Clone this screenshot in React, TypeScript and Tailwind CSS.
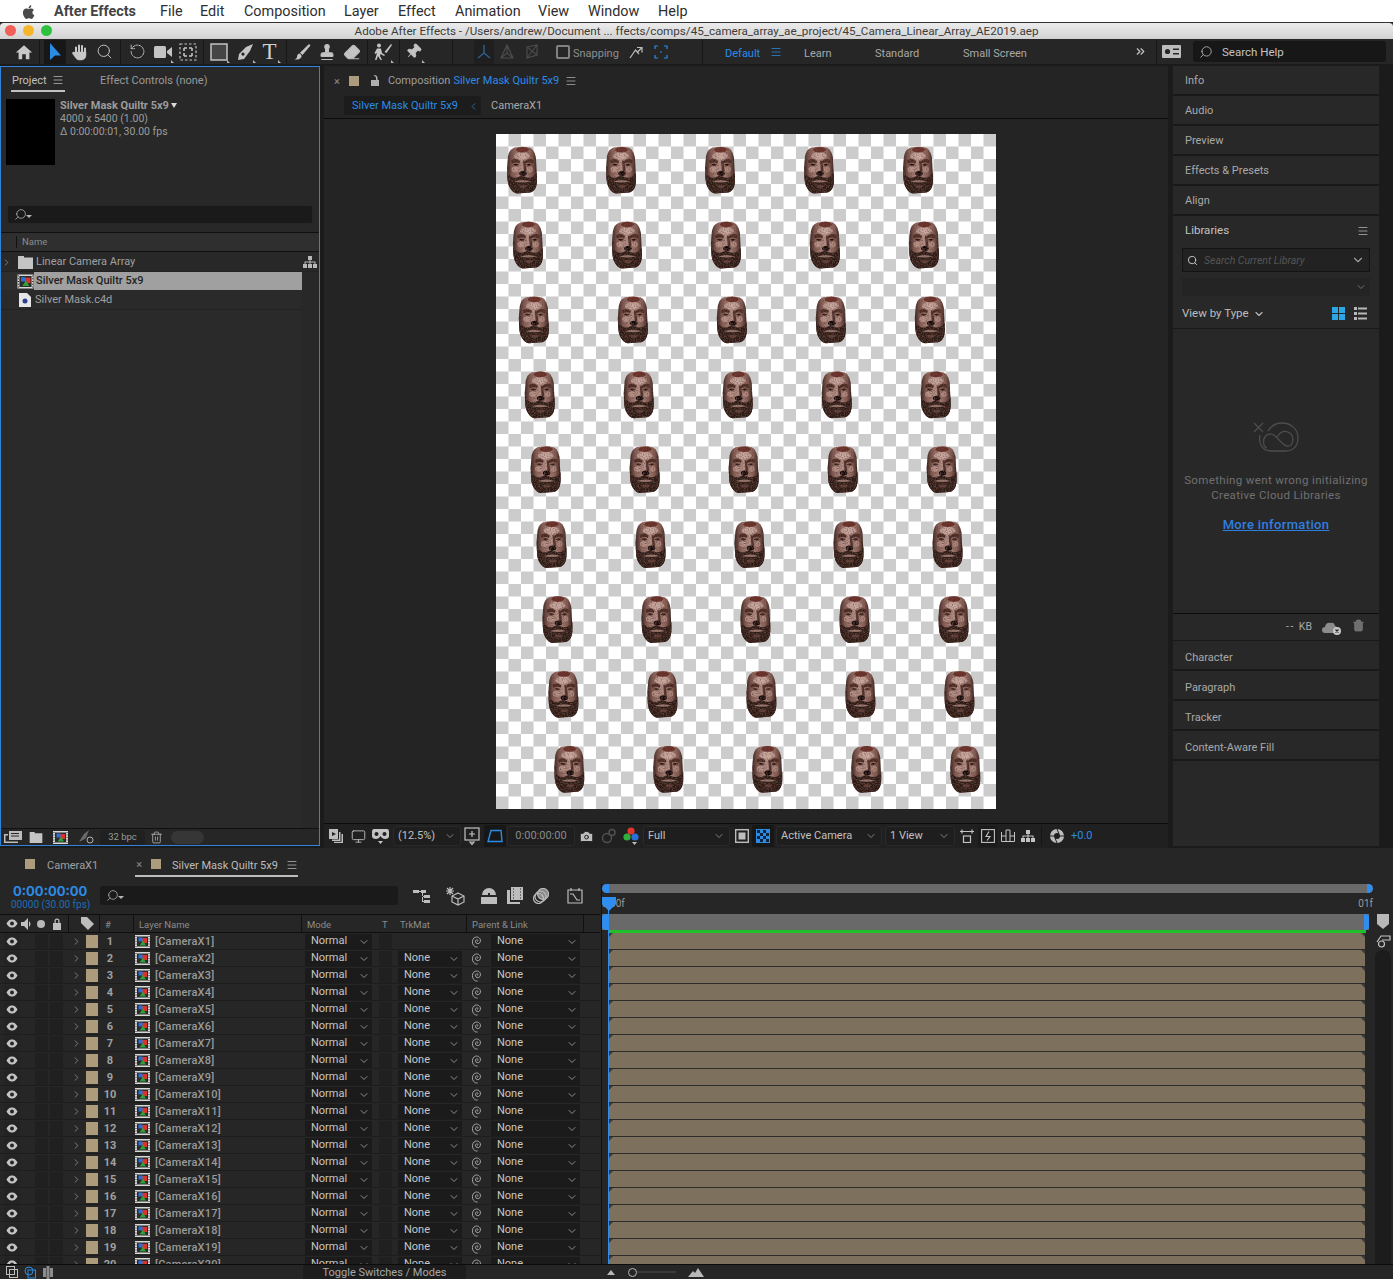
import React from 'react';
import {
  ChevronDown, ChevronRight, Search, RotateCcw, Stamp, Eraser, Pin, Trash2, Menu, Monitor, Camera, ChevronsRight,
} from 'lucide-react';

const BLUE = '#2b8ce6';
const LAYERS = Array.from({ length: 20 }, (_, i) => i + 1);
const ROWS = Array.from({ length: 9 }, (_, i) => i);
const COLS = Array.from({ length: 5 }, (_, i) => i);

// small triangle that marks a tool with a flyout
const Flyout = () => <span className="absolute right-[1px] bottom-[1px] h-0 w-0 border-t-[3px] border-l-[3px] border-t-transparent border-l-[#b5b5b5]" />;

const Slot = ({ className = 'w-[25px]', fly, children }: { className?: string; fly?: boolean; children?: React.ReactNode }) => (
  <div className={`relative flex h-[24px] shrink-0 items-center justify-center text-[#bdbdbd] ${className}`}>
    {children}
    {fly && <Flyout />}
  </div>
);

const Sep = ({ className = 'h-[24px]' }: { className?: string }) => <div className={`w-[1px] shrink-0 bg-[#171717] ${className}`} />;

const Burger = ({ className = '' }: { className?: string }) => (
  <Menu size={12} strokeWidth={1.5} className={`shrink-0 ${className}`} />
);

// composition icon: filmstrip frame with the red, green and blue shapes
const CompIcon = ({ className = '' }: { className?: string }) => (
  <svg width="15" height="13" viewBox="0 0 15 13" className={`shrink-0 ${className}`}>
    <rect width="15" height="13" fill="#d8d8d8" />
    <rect x="2" y="1.5" width="11" height="10" fill="#2b2b2b" />
    <path d="M0.5 1.5h1M0.5 4h1M0.5 6.5h1M0.5 9h1M0.5 11.5h1M13.5 1.5h1M13.5 4h1M13.5 6.5h1M13.5 9h1M13.5 11.5h1" stroke="#222" strokeWidth="1" />
    <rect x="7" y="3" width="5" height="5" fill="#d8342c" />
    <rect x="3.5" y="2.5" width="4" height="4" fill="#2d6fd8" />
    <path d="M4.5 10.5L8 5.5L11 10.5Z" fill="#2fa03a" />
  </svg>
);

const Eye = () => (
  <svg width="12" height="9" viewBox="0 0 12 9">
    <path d="M0.5 4.5C2.5 1 4 0.5 6 0.5S9.5 1 11.5 4.5C9.5 8 8 8.5 6 8.5S2.5 8 0.5 4.5Z" fill="#c4c4c4" />
    <circle cx="6" cy="4.5" r="2" fill="#262626" />
  </svg>
);

const Spiral = () => (
  <svg width="13" height="13" viewBox="0 0 13 13" fill="none" stroke="#a8a8a8" strokeWidth="1">
    <path d="M6.5 6.5C7.6 5.6 6.6 4.3 5.4 4.9C3.9 5.7 4.3 8.2 6.2 8.6C8.6 9 10 6.6 9.3 4.5C8.4 2 5 1.2 3 3C1 4.8 0.9 8.4 2.6 10.4C3.6 11.6 5 12.2 6.6 12" />
  </svg>
);

const Dropdown = ({ label, className = '' }: { label: string; className?: string }) => (
  <div className={`flex h-[15px] shrink-0 items-center justify-between bg-[#1b1b1b] pl-[6px] pr-[2px] text-[11px] text-[#c6c6c6] ${className}`}>
    <span>{label}</span>
    <ChevronDown size={12} strokeWidth={1.5} className="text-[#b0b0b0]" />
  </div>
);

const FooterBox = ({ label, className = '', chevron = true, muted }: { label: string; className?: string; chevron?: boolean; muted?: boolean }) => (
  <div className={`flex h-[20px] shrink-0 items-center justify-between rounded-[3px] border border-[#2a2a2a] bg-[#1e1e1e] pl-[4px] pr-[4px] text-[11px] ${muted ? 'text-[#8a8a8a]' : 'text-[#c0c0c0]'} ${className}`}>
    <span>{label}</span>
    {chevron && <ChevronDown size={12} strokeWidth={1.5} className="text-[#a0a0a0]" />}
  </div>
);

const SearchGlass = () => (
  <span className="flex items-center text-[#b5b5b5]">
    <Search size={13} strokeWidth={1.4} className="-scale-x-100" />
    <span className="ml-[-1px] mt-[3px] h-0 w-0 border-x-[3px] border-t-[3px] border-x-transparent border-t-[#b5b5b5]" />
  </span>
);

// one silver mask head of the quilt
const FaceSymbol = () => (
  <symbol id="face" viewBox="0 0 30 47" overflow="visible">
    <g filter="url(#grain)">
      <path d="M8 1Q15 -0.5 22 1C26 2 28 6 29 12L30 33C30 40 28 45 23 46L10 47C5 46 1 40 0.6 33L0 22L1 10C2 5 4 2 8 1Z" fill="url(#skin)" />
      <path d="M0.3 26C3 30 6 32 10 31L15 29L20 31C24 32 28 30 30 26L30 33C30 40 28 45 23 46L10 47C5 46 1 40 0.6 33Z" fill="#2f1c19" />
      <ellipse cx="15" cy="9.5" rx="8" ry="3.5" fill="#dcbcb2" opacity="0.6" />
      <ellipse cx="8" cy="23" rx="3.5" ry="3" fill="#cba69b" opacity="0.65" />
      <ellipse cx="23" cy="23" rx="3" ry="3" fill="#c19c91" opacity="0.6" />
      <ellipse cx="15.5" cy="3.2" rx="6.5" ry="2.8" fill="#6b2f27" />
      <path d="M4 14Q9 11 13 14.5L12.5 17Q9 15 5 17ZM18 14.5Q22 11 27 14L26 17Q22 15 18.5 17Z" fill="#4a2924" />
      <path d="M6 18Q9 16.5 12 18.5L9 19.5ZM19 18.5Q22 16.5 25 18L22 19.5Z" fill="#27140f" />
      <path d="M16 14L18.5 15L19.5 25L17 25Z" fill="#4d2e29" />
      <ellipse cx="16" cy="27" rx="3.8" ry="2.5" fill="#170c09" />
      <path d="M7 35Q16 32 24 35Q16 37 7 35Z" fill="#9d7b70" />
      <path d="M12 39Q16 38 20 39L19 41Q16 42 13 41Z" fill="#5f3e36" />
    </g>
  </symbol>
);

const CompCanvas = () => (
  <svg width="500" height="675" viewBox="0 0 500 675" className="block shrink-0">
    <defs>
      <pattern id="checker" width="25" height="25" patternUnits="userSpaceOnUse">
        <rect width="25" height="25" fill="#ffffff" />
        <rect x="12.5" width="12.5" height="12.5" fill="#cccccc" />
        <rect y="12.5" width="12.5" height="12.5" fill="#cccccc" />
      </pattern>
      <linearGradient id="skin" x1="0" x2="1" y1="0" y2="0">
        <stop offset="0" stopColor="#2f1d1a" />
        <stop offset="0.16" stopColor="#80584f" />
        <stop offset="0.5" stopColor="#b8938a" />
        <stop offset="0.84" stopColor="#835a50" />
        <stop offset="1" stopColor="#2c1b18" />
      </linearGradient>
      <filter id="grain" x="-5%" y="-5%" width="110%" height="110%">
        <feTurbulence type="fractalNoise" baseFrequency="0.8" numOctaves="2" seed="4" result="n" />
        <feColorMatrix in="n" type="matrix" values="0 0 0 0 0.14  0 0 0 0 0.07  0 0 0 0 0.06  2 0 0 0 -0.85" result="d" />
        <feComposite in="d" in2="SourceAlpha" operator="in" result="s" />
        <feMerge>
          <feMergeNode in="SourceGraphic" />
          <feMergeNode in="s" />
        </feMerge>
      </filter>
      <FaceSymbol />
    </defs>
    <rect width="500" height="675" fill="url(#checker)" />
    {ROWS.map(r =>
      COLS.map(c => (
        <use key={`${r}-${c}`} href="#face" x={11 + 99 * c + 5.9 * r} y={12.5 + 74.9 * r} width="30" height="47" />
      )),
    )}
  </svg>
);

const MenuBar = () => (
  <div className="flex h-[22px] shrink-0 items-center bg-white pt-[1px] text-[14.4px] text-[#2e2e2e]">
    <svg width="14" height="16" viewBox="0 0 14 16" className="ml-[21px] mr-[19px] shrink-0" fill="#4a4a4a">
      <path d="M11.4 8.5c0-1.7 1.4-2.5 1.5-2.6-.8-1.2-2.1-1.4-2.5-1.4-1.1-.1-2.1.6-2.7.6s-1.4-.6-2.3-.6C4.2 4.5 3.1 5.2 2.5 6.2c-1.2 2.1-.3 5.3.9 7 .6.8 1.3 1.8 2.2 1.7.9 0 1.2-.6 2.3-.6s1.4.6 2.3.6c1 0 1.6-.8 2.1-1.7.7-1 1-1.9 1-2-.1 0-1.9-.8-1.9-2.7zM9.6 3.4c.5-.6.8-1.4.7-2.2-.7 0-1.5.5-2 1.1-.4.5-.8 1.3-.7 2.1.8 0 1.5-.4 2-1z" />
    </svg>
    <span className="w-[106px] shrink-0 font-bold text-[#444]">After Effects</span>
    <span className="w-[40px] shrink-0">File</span>
    <span className="w-[44px] shrink-0">Edit</span>
    <span className="w-[100px] shrink-0">Composition</span>
    <span className="w-[54px] shrink-0">Layer</span>
    <span className="w-[57px] shrink-0">Effect</span>
    <span className="w-[83px] shrink-0">Animation</span>
    <span className="w-[50px] shrink-0">View</span>
    <span className="w-[70px] shrink-0">Window</span>
    <span>Help</span>
  </div>
);

const TitleBar = () => (
  <div className="relative flex h-[17px] shrink-0 items-center justify-center rounded-t-[4px] border-t border-[#333] bg-gradient-to-b from-[#ececec] to-[#d2d2d2] pt-[1px] text-[11.65px] text-[#3c3c3c]">
    <div className="absolute left-[5px] top-[2px] flex gap-[7px]">
      <span className="h-[11px] w-[11px] rounded-full bg-[#f15f56]" />
      <span className="h-[11px] w-[11px] rounded-full bg-[#f6b62c]" />
      <span className="h-[11px] w-[11px] rounded-full bg-[#2cc23f]" />
    </div>
    Adobe After Effects - /Users/andrew/Document ... ffects/comps/45_camera_array_ae_project/45_Camera_Linear_Array_AE2019.aep
  </div>
);

const Toolbar = () => (
  <div className="flex h-[25px] shrink-0 items-center bg-[#262626] text-[11px] text-[#a8a8a8]">
    <Slot className="ml-[11px] w-[25px]">
      <svg width="18" height="18" viewBox="0 0 20 20" fill="#c8c8c8"><path d="M10 2.5L19 10.5H16V18H12V12.5H8V18H4V10.5H1Z" /></svg>
    </Slot>
    <Sep className="ml-[3px] h-[24px]" />
    <Slot className="ml-[4px] w-[22px] rounded-[2px] bg-[#171717]">
      <svg width="16" height="20" viewBox="0 0 16 20" fill={BLUE}><path d="M3 1V18L8 13.5H14Z" /></svg>
    </Slot>
    <Slot className="ml-[1px] w-[25px]">
      <svg width="18" height="18" viewBox="0 0 18 18" fill="#c8c8c8" stroke="#c8c8c8" strokeLinecap="round">
        <path d="M5 10V4.5M8 9V2.5M11 9V3M14 10V5.5" strokeWidth="2" fill="none" />
        <path d="M4 9H15V12C15 15 13 17 10 17H8C6 17 5 15.5 4 14L1.5 10.5C1 9.5 2.5 8.5 3.5 9.5Z" strokeWidth="0.5" />
      </svg>
    </Slot>
    <Slot><Search size={17} strokeWidth={1.4} /></Slot>
    <Sep className="ml-[3px] h-[24px]" />
    <Slot className="ml-[4px] w-[25px]"><RotateCcw size={17} strokeWidth={1.4} strokeDasharray="3 1.5" /></Slot>
    <Slot fly>
      <svg width="20" height="16" viewBox="0 0 20 16" fill="#c4c4c4"><rect x="1" y="2" width="12" height="12" rx="1.5" /><path d="M14 7L19 3V13L14 9Z" /></svg>
    </Slot>
    <Slot>
      <svg width="18" height="18" viewBox="0 0 18 18" fill="none" stroke="#c4c4c4" strokeWidth="1.2">
        <rect x="1" y="1" width="16" height="16" strokeDasharray="2.5 2" />
        <path d="M5 5h3M5 5v3M13 5h-3M13 5v3M5 13h3M5 13v-3M13 13h-3M13 13v-3" strokeWidth="1.6" />
      </svg>
    </Slot>
    <Sep className="ml-[3px] h-[24px]" />
    <Slot className="ml-[2px] w-[25px]" fly>
      <svg width="18" height="18" viewBox="0 0 18 18"><rect x="1" y="1" width="16" height="16" fill="#454545" stroke="#c4c4c4" strokeWidth="1.5" /></svg>
    </Slot>
    <Slot className="ml-[1px] w-[25px]" fly>
      <svg width="18" height="18" viewBox="0 0 18 18" fill="#c4c4c4"><path d="M17 1L14 8L8 16L2 17L3 11L10 4ZM7 9.5a1.6 1.6 0 1 0 .01 0Z" fillRule="evenodd" /></svg>
    </Slot>
    <Slot fly><span className="font-['Liberation_Serif',serif] text-[23px] leading-none text-[#d0d0d0]">T</span></Slot>
    <Sep className="ml-[4px] h-[24px]" />
    <Slot className="ml-[2px] w-[25px]">
      <svg width="18" height="18" viewBox="0 0 18 18" fill="#c4c4c4"><path d="M16 1L17.5 2.5L9.5 12L7 9.8Z" /><path d="M6 10.5Q9 11.5 8.5 14Q7 17 1.5 16.5Q4.5 15 4 13Q4.5 11 6 10.5Z" /></svg>
    </Slot>
    <Slot><Stamp size={18} strokeWidth={1.4} fill="#c4c4c4" /></Slot>
    <Slot><Eraser size={18} strokeWidth={1.4} fill="#c4c4c4" /></Slot>
    <Sep className="ml-[3px] h-[24px]" />
    <Slot className="ml-[2px] w-[25px]" fly>
      <svg width="20" height="20" viewBox="0 0 20 20" fill="#c4c4c4">
        <circle cx="6" cy="3.5" r="2" />
        <path d="M4 6.5H8L9 11L12 13L11 14L7.5 12L7 14L9 18H7.5L5 14L3.5 18H2L4 11L2.5 12L1.5 11Z" />
        <path d="M18 2L19 3L13.5 11L11.5 10Z" />
      </svg>
    </Slot>
    <Sep className="ml-[4px] h-[24px]" />
    <Slot className="ml-[1px] w-[25px]" fly><Pin size={17} strokeWidth={1.4} fill="#c4c4c4" className="rotate-45" /></Slot>
    <Sep className="ml-[26px] h-[24px]" />
    <Slot className="ml-[21px] w-[20px] rounded-[2px] bg-[#1f1f1f]">
      <svg width="18" height="18" viewBox="0 0 18 18" fill="none" stroke="#2c5f8f" strokeWidth="1.5"><path d="M9 2V10M9 10L3 15M9 10L15 15" /></svg>
    </Slot>
    <Slot>
      <svg width="18" height="18" viewBox="0 0 18 18" fill="none" stroke="#4b4b4b" strokeWidth="1.2"><path d="M9 2V10M9 10L3 15M9 10L15 15M9 2L3 15H15Z" /></svg>
    </Slot>
    <Slot>
      <svg width="18" height="18" viewBox="0 0 18 18" fill="none" stroke="#4b4b4b" strokeWidth="1.2"><path d="M4 4L14 2V12L4 15ZM4 4L14 12M4 15L14 2" /></svg>
    </Slot>
    <span className="ml-[12px] h-[14px] w-[14px] shrink-0 rounded-[2px] border-2 border-[#808080]" />
    <span className="ml-[3px] mt-[5px] w-[53px] shrink-0 text-[#8f8f8f]">Snapping</span>
    <Slot className="w-[20px]">
      <svg width="16" height="16" viewBox="0 0 16 16" fill="none" stroke="#bdbdbd" strokeWidth="1.2"><path d="M2 14L7.5 6L11 10M9 3.5H14V8.5M14 3.5L9 8.5" /></svg>
    </Slot>
    <Slot className="ml-[5px] w-[20px]">
      <svg width="14" height="14" viewBox="0 0 14 14" fill="none" stroke={BLUE} strokeWidth="1.2"><path d="M1 4V1H4M10 1H13V4M13 10V13H10M4 13H1V10M6 7H8" /></svg>
    </Slot>
    <Sep className="ml-[31px] h-[24px]" />
    <span className="ml-[22px] mt-[5px] w-[36px] shrink-0" style={{ color: BLUE }}>Default</span>
    <Burger className="ml-[9px] text-[#2b8ce6]" />
    <span className="ml-[22px] mt-[5px] w-[71px] shrink-0">Learn</span>
    <span className="mt-[5px] w-[88px] shrink-0">Standard</span>
    <span className="mt-[5px] w-[80px] shrink-0">Small Screen</span>
    <ChevronsRight size={13} strokeWidth={2.2} className="ml-[91px] shrink-0 text-[#c4c4c4]" />
    <Sep className="ml-[9px] h-[24px]" />
    <span className="ml-[5px] flex h-[13px] w-[19px] shrink-0 items-center justify-center gap-[1px] rounded-[1px] bg-[#bdbdbd] text-[#222]">
      <svg width="17" height="11" viewBox="0 0 17 11" fill="#262626"><circle cx="4.5" cy="5.5" r="2.6" /><path d="M10 2.5H16V4H10ZM10 7H16V8.5H10Z" /></svg>
    </span>
    <div className="ml-[12px] flex h-[21px] w-[193px] shrink-0 items-center rounded-[3px] bg-[#171717] pl-[6px] text-[#c4c4c4]">
      <Search size={14} strokeWidth={1.4} className="-scale-x-100 text-[#bdbdbd]" />
      <span className="ml-[9px] mt-[3px] text-[11.5px]">Search Help</span>
    </div>
  </div>
);

const ProjectPanel = () => (
  <div className="flex h-[780px] w-[320px] shrink-0 flex-col border border-[#2f84d8] bg-[#282828] text-[11px] text-[#a0a0a0]">
    <div className="flex h-[25px] shrink-0 items-start pl-[10px] pt-[7px]">
      <div className="flex h-[18px] w-[54px] items-start gap-[5px] border-b-2 border-[#c0c0c0] pl-[1px] text-[#c0c0c0]">
        <span className="leading-[13px]">Project</span>
        <Burger className="text-[#bcbcbc]" />
      </div>
      <span className="ml-[35px] leading-[13px] text-[#9a9a9a]">Effect Controls (none)</span>
    </div>
    <div className="flex h-[66px] shrink-0 pl-[5px] pt-[7px]">
      <div className="h-[66px] w-[49px] shrink-0 bg-black" />
      <div className="ml-[5px] flex flex-col text-[10.5px] leading-[13px] text-[#9c9c9c]">
        <div className="flex items-center gap-[2px] text-[11px] font-bold">
          Silver Mask Quiltr 5x9
          <span className="h-0 w-0 border-x-[3.5px] border-t-[5px] border-x-transparent border-t-[#d8d8d8]" />
        </div>
        <span>4000 x 5400 (1.00)</span>
        <span>Δ 0:00:00:01, 30.00 fps</span>
      </div>
    </div>
    <div className="mx-[6px] mt-[47px] flex h-[19px] shrink-0 items-center rounded-[3px] border border-[#262626] bg-[#1a1a1a] pl-[6px]">
      <SearchGlass />
    </div>
    <div className="mt-[8px] flex h-[20px] shrink-0 items-center border-y border-[#101010] bg-[#2f2f2f] text-[9.5px] text-[#8c8c8c]">
      <span className="ml-[15px] h-[12px] w-[1px] bg-[#111]" />
      <span className="ml-[5px]">Name</span>
    </div>
    <div className="flex min-h-0 flex-1 flex-col">
      <div className="flex h-[20px] shrink-0 items-center border-b border-[#222] pt-[1px]">
        <ChevronRight size={11} strokeWidth={1.5} className="ml-[0px] text-[#9c9c9c]" />
        <svg width="15" height="13" viewBox="0 0 15 13" className="ml-[6px]" fill="#c4c4c4"><path d="M0 0H6V1.5H15V13H0Z" /></svg>
        <span className="ml-[3px] flex-1">Linear Camera Array</span>
        <svg width="14" height="13" viewBox="0 0 14 13" className="mr-[2px]" fill="#b8b8b8"><path d="M5 0H9V4H7.5V5.5H12.5V8H14V12H10V8H11.5V6.5H7.5V8H9V12H5V8H6.5V6.5H2.5V8H4V12H0V8H1.5V5.5H6.5V4H5Z" /></svg>
      </div>
      <div className="flex min-h-0 flex-1 flex-col">
        <div className="flex w-[301px] flex-1 flex-col bg-[#2a2a2a]">
          <div className="flex h-[18px] shrink-0 items-center bg-[#2e2e2e]">
            <CompIcon className="ml-[17px] scale-110" />
            <span className="ml-[1px] flex h-full flex-1 items-center bg-[#a0a0a0] pl-[2px] font-medium text-[#1f1f1f]">Silver Mask Quiltr 5x9</span>
          </div>
          <div className="flex h-[20px] shrink-0 items-center border-b border-[#222] pt-[1px]">
            <svg width="12" height="14" viewBox="0 0 12 14" className="ml-[18px]"><path d="M0 0H8L12 4V14H0Z" fill="#e6e6e6" /><circle cx="6" cy="8" r="2.5" fill="#2a3f8f" /></svg>
            <span className="ml-[4px]">Silver Mask.c4d</span>
          </div>
        </div>
      </div>
    </div>
    <div className="flex h-[17px] shrink-0 items-center border-t border-[#111] bg-[#262626] text-[#c0c0c0]">
      <svg width="18" height="12" viewBox="0 0 18 12" className="ml-[3px]" fill="#bdbdbd"><path d="M5 0H18V9H5ZM0 3H4V4.5H1.5V10.5H14V12H0Z" /><path d="M7 2.5H15M7 5H15" stroke="#262626" /></svg>
      <svg width="14" height="11" viewBox="0 0 15 13" className="ml-[7px]" fill="#c4c4c4"><path d="M0 0H6V1.5H15V13H0Z" /></svg>
      <CompIcon className="ml-[10px]" />
      <svg width="18" height="14" viewBox="0 0 18 14" className="ml-[9px]" fill="#6a6a6a"><path d="M12 0L9 8L6 10L2 12L5 7L7 4Z" /><circle cx="13" cy="10" r="3" fill="none" stroke="#b0b0b0" /></svg>
      <div className="ml-[5px] flex h-[15px] w-[45px] items-center justify-center rounded-[3px] bg-[#202020] text-[9.5px] text-[#999]">32 bpc</div>
      <Trash2 size={13} strokeWidth={1.4} className="ml-[5px]" />
      <span className="ml-[8px] h-[13px] w-[33px] rounded-full bg-[#363636]" />
    </div>
  </div>
);

const ViewerFooter = () => (
  <div className="flex h-[25px] shrink-0 items-center border-t border-[#0c0c0c] bg-[#202020] text-[#b8b8b8]">
    <svg width="14" height="14" viewBox="0 0 14 14" className="ml-[5px]" fill="#bdbdbd"><path d="M0 0H9V10H0ZM10 3H11.5V12H3V10.6H10ZM12.5 5H14V14H5V12.8H12.5Z" /><path d="M3 3L7 5L3 7Z" fill="#222" /></svg>
    <Monitor size={15} strokeWidth={1.5} className="ml-[8px]" />
    <svg width="17" height="15" viewBox="0 0 17 15" className="ml-[6px]" fill="#c4c4c4"><path d="M2 0H15Q17 0 17 3V7Q17 10 13 10Q10 10 8.5 7Q7 10 4 10Q0 10 0 7V3Q0 0 2 0Z" /><circle cx="4.5" cy="5" r="2" fill="#222" /><circle cx="12.5" cy="5" r="2" fill="#222" /><path d="M6 12H11L8.5 15Z" /></svg>
    <FooterBox label="(12.5%)" className="ml-[4px] w-[68px]" />
    <svg width="16" height="18" viewBox="0 0 16 18" className="ml-[3px]" fill="none" stroke="#c4c4c4" strokeWidth="1.2"><rect x="1" y="1" width="14" height="12" /><path d="M8 4V10M5 7H11M6 15H10L8 17.5Z" /></svg>
    <div className="ml-[4px] flex h-[22px] w-[22px] shrink-0 items-center justify-center rounded-[2px] bg-[#171717]">
      <svg width="16" height="14" viewBox="0 0 16 14" fill="none" stroke={BLUE} strokeWidth="1.4"><path d="M4 1.5H14L15 12.5H1Z" /></svg>
    </div>
    <FooterBox label="0:00:00:00" chevron={false} muted className="ml-[1px] w-[68px] justify-center" />
    <Camera size={15} strokeWidth={1.6} fill="#bdbdbd" stroke="#222" className="ml-[4px] text-[#bdbdbd]" />
    <svg width="16" height="16" viewBox="0 0 16 16" className="ml-[7px]" fill="none" stroke="#505050" strokeWidth="1.5"><circle cx="6" cy="10" r="4.5" /><circle cx="11" cy="4.5" r="3" /></svg>
    <svg width="16" height="18" viewBox="0 0 16 18" className="ml-[6px]">
      <circle cx="8" cy="4" r="3.6" fill="#e3342c" /><circle cx="4" cy="10" r="3.6" fill="#2fae3a" /><circle cx="12" cy="10" r="3.6" fill="#2d6fd8" /><path d="M9 15H14L11.5 18Z" fill="#bdbdbd" />
    </svg>
    <FooterBox label="Full" className="ml-[4px] w-[87px]" />
    <svg width="14" height="14" viewBox="0 0 14 14" className="ml-[5px]"><rect x="0.7" y="0.7" width="12.6" height="12.6" fill="none" stroke="#bdbdbd" strokeWidth="1.4" /><rect x="3.5" y="3.5" width="7" height="7" fill="#bdbdbd" /></svg>
    <div className="ml-[3px] flex h-[22px] w-[22px] shrink-0 items-center justify-center rounded-[2px] bg-[#171717]">
      <svg width="14" height="14" viewBox="0 0 14 14"><rect width="14" height="14" fill={BLUE} /><path d="M1 1H4V4H1ZM7 1H10V4H7ZM4 4H7V7H4ZM10 4H13V7H10ZM1 7H4V10H1ZM7 7H10V10H7ZM4 10H7V13H4ZM10 10H13V13H10Z" fill="#10233a" /></svg>
    </div>
    <FooterBox label="Active Camera" className="ml-[2px] w-[106px]" />
    <FooterBox label="1 View" className="ml-[3px] w-[70px]" />
    <svg width="16" height="14" viewBox="0 0 16 14" className="ml-[4px]" fill="none" stroke="#c4c4c4" strokeWidth="1.2"><path d="M1 2.5H15M3 0.5V4.5M13 0.5V4.5" /><rect x="4.5" y="7" width="7" height="6.5" /></svg>
    <div className="ml-[3px] flex h-[21px] w-[19px] shrink-0 items-center justify-center bg-[#1b1b1b]">
      <svg width="14" height="14" viewBox="0 0 14 14" fill="none" stroke="#c4c4c4" strokeWidth="1.1"><rect x="0.6" y="0.6" width="12.8" height="12.8" /><path d="M8 2.5L5 7.5H9L6 11.5" /></svg>
    </div>
    <svg width="14" height="14" viewBox="0 0 14 14" className="ml-[4px]" fill="none" stroke="#c4c4c4"><path d="M0.5 3V12.5H13.5V3M5 12V1H9V12M0.5 7H5M9 7H13.5" /></svg>
    <svg width="14" height="13" viewBox="0 0 14 13" className="ml-[6px]" fill="#c4c4c4"><path d="M5 0H9V4H7.5V5.5H12.5V8H14V12H10V8H11.5V6.5H7.5V8H9V12H5V8H6.5V6.5H2.5V8H4V12H0V8H1.5V5.5H6.5V4H5Z" /></svg>
    <Sep className="ml-[6px] h-[20px]" />
    <svg width="14" height="14" viewBox="0 0 14 14" className="ml-[8px]" fill="#bdbdbd"><path d="M7 0A7 7 0 1 1 7 14A7 7 0 1 1 7 0ZM7 4A3 3 0 1 0 7 10A3 3 0 1 0 7 4Z" fillRule="evenodd" /><path d="M7 0L9 5M14 7L9 7M7 14L5 9M0 7L5 7" stroke="#222" /></svg>
    <span className="ml-[7px] text-[11px]" style={{ color: BLUE }}>+0.0</span>
  </div>
);

const ViewerPanel = () => (
  <div className="ml-[4px] flex h-[782px] w-[844px] shrink-0 flex-col bg-[#242424] text-[11px]">
    <div className="flex h-[28px] shrink-0 items-center pt-[2px] text-[#9c9c9c]">
      <span className="ml-[10px] text-[11px] leading-none text-[#8c8c8c]">×</span>
      <span className="ml-[9px] h-[10px] w-[10px] bg-[#ad9c7c]" />
      <svg width="10" height="11" viewBox="0 0 10 11" className="ml-[11px] mb-[2px]" fill="#b0b0b0"><path d="M1 5H6V3Q6 1 4 1V0Q7.5 0 7.5 3V5H9V11H1Z" /></svg>
      <span className="ml-[8px]">Composition</span>
      <span className="ml-[3px]" style={{ color: BLUE }}>Silver Mask Quiltr 5x9</span>
      <Burger className="ml-[6px] text-[#b0b0b0]" />
    </div>
    <div className="flex h-[25px] shrink-0 items-start border-b border-[#0c0c0c] pl-[20px] pt-[2px]">
      <div className="flex h-[19px] w-[137px] items-center justify-between rounded-[2px] bg-[#1c1c1c] pl-[8px] pr-[2px] pt-[1px]" style={{ color: BLUE }}>
        <span>Silver Mask Quiltr 5x9</span>
        <ChevronRight size={11} strokeWidth={1.5} className="rotate-180" />
      </div>
      <span className="ml-[10px] mt-[2px] text-[#a8a8a8]">CameraX1</span>
    </div>
    <div className="flex min-h-0 flex-1 pl-[172px] pt-[15px]">
      <CompCanvas />
    </div>
    <ViewerFooter />
  </div>
);

const SidePanelTab = ({ label, className = 'pt-[2px]' }: { label: string; className?: string }) => (
  <div className={`flex h-[30px] shrink-0 items-center border-b-2 border-[#191919] pl-[12px] ${className}`}>{label}</div>
);

const SidePanel = () => (
  <div className="ml-[5px] flex w-[206px] shrink-0 flex-col bg-[#282828] text-[11px] text-[#a8a8a8]">
    <SidePanelTab label="Info" />
    <SidePanelTab label="Audio" />
    <SidePanelTab label="Preview" />
    <SidePanelTab label="Effects & Presets" />
    <SidePanelTab label="Align" />
    <div className="flex h-[30px] shrink-0 items-center justify-between pl-[12px] pr-[10px] text-[11.5px] text-[#c4c4c4]">
      Libraries
      <Burger className="text-[#b8b8b8]" />
    </div>
    <div className="mx-[9px] mt-[2px] flex h-[24px] shrink-0 items-center border border-[#131313] bg-[#222] pl-[4px] pr-[4px]">
      <Search size={11} strokeWidth={2} className="text-[#d0d0d0]" />
      <span className="ml-[6px] mt-[1px] flex-1 text-[10.5px] italic text-[#555]">Search Current Library</span>
      <ChevronDown size={14} strokeWidth={2} className="text-[#a0a0a0]" />
    </div>
    <div className="mx-[9px] mt-[6px] flex h-[18px] shrink-0 items-center justify-end bg-[#242424] pr-[3px]">
      <ChevronDown size={12} strokeWidth={1.8} className="text-[#777]" />
    </div>
    <div className="flex h-[33px] shrink-0 items-center border-b border-[#191919] pl-[9px] pr-[12px] pt-[3px] text-[11.5px] text-[#bdbdbd]">
      View by Type
      <ChevronDown size={12} strokeWidth={2.2} className="ml-[4px]" />
      <svg width="13" height="13" viewBox="0 0 13 13" className="ml-auto" fill="#2ca7e6"><path d="M0 0H6V6H0ZM7 0H13V6H7ZM0 7H6V13H0ZM7 7H13V13H7Z" /></svg>
      <svg width="13" height="13" viewBox="0 0 13 13" className="ml-[9px]" fill="#b8b8b8"><path d="M0 0H3V3H0ZM4 .5H13V2.5H4ZM0 5H3V8H0ZM4 5.5H13V7.5H4ZM0 10H3V13H0ZM4 10.5H13V12.5H4Z" /></svg>
    </div>
    <div className="flex h-[285px] shrink-0 flex-col items-center border-b border-[#0c0c0c] pt-[91px]">
      <svg width="46" height="34" viewBox="0 0 46 34" fill="none" stroke="#4d4d4d" strokeWidth="1.3">
        <path d="M1 3L10 12M10 3L1 12" />
        <path d="M7 15C5 24 10 31 18 31H33C41 31 45 25 45 18C45 9 38 3 29 3C23 3 18 6 15 11" />
        <path d="M14 28C9 26 9 15 17 14C23 13 28 25 34 26C41 27 42 15 35 12C30 10 26 14 24 17" />
      </svg>
      <span className="mt-[19px] text-center text-[11.5px] leading-[15px] tracking-[0.35px] text-[#707070]">
        Something went wrong initializing
        <br />
        Creative Cloud Libraries
      </span>
      <span className="mt-[12px] text-[13px] font-medium tracking-[0.35px] underline" style={{ color: '#2f7fe0' }}>More information</span>
    </div>
    <div className="flex h-[27px] shrink-0 items-center border-b border-[#191919] pl-[113px] text-[10.5px] text-[#a8a8a8]">
      <span className="tracking-[1.5px]">--</span>
      <span className="ml-[4px]">KB</span>
      <svg width="20" height="14" viewBox="0 0 20 14" className="ml-[10px] mt-[2px]" fill="#8c8c8c"><path d="M3 12A3 3 0 0 1 3 6Q4 1 9 2Q12 1 13 5Q16 5 15 12Z" /><circle cx="15" cy="10" r="4" fill="#c8c8c8" /><path d="M13.5 8.5L16.5 11.5M16.5 8.5L13.5 11.5" stroke="#222" strokeWidth="1.2" /></svg>
      <Trash2 size={13} strokeWidth={1.5} fill="#6f6f6f" className="ml-[10px] mb-[4px] text-[#7a7a7a]" />
    </div>
    <SidePanelTab label="Character" className="pt-[6px]" />
    <SidePanelTab label="Paragraph" className="pt-[6px]" />
    <SidePanelTab label="Tracker" className="pt-[6px]" />
    <SidePanelTab label="Content-Aware Fill" className="pt-[6px]" />
  </div>
);

const TimelineTabs = () => (
  <div className="flex h-[29px] shrink-0 items-start pt-[10px] text-[11px] text-[#a0a0a0]">
    <span className="ml-[25px] mt-[1px] h-[10px] w-[10px] bg-[#ad9c7c]" />
    <span className="ml-[12px]">CameraX1</span>
    <div className="ml-[37px] flex h-[19px] w-[163px] items-start border-b-2 border-[#bdbdbd] pl-[1px]">
      <span className="leading-[14px] text-[#8c8c8c]">×</span>
      <span className="ml-[9px] mt-[1px] h-[10px] w-[10px] bg-[#ad9c7c]" />
      <span className="ml-[11px] text-[#bdbdbd]">Silver Mask Quiltr 5x9</span>
      <Burger className="ml-[8px] mt-[1px] text-[#b8b8b8]" />
    </div>
  </div>
);

const TimelineControls = () => (
  <div className="flex h-[37px] shrink-0 items-center text-[#b8b8b8]">
    <div className="ml-[11px] mt-[3px] flex w-[89px] shrink-0 flex-col">
      <span className="pl-[2px] font-['Inter',sans-serif] text-[13px] font-bold leading-[16px]" style={{ color: BLUE }}>0:00:00:00</span>
      <span className="text-[10px] leading-[12px] text-[#1f6db5]">00000 (30.00 fps)</span>
    </div>
    <div className="flex h-[19px] w-[298px] shrink-0 items-center rounded-[3px] bg-[#1a1a1a] pl-[6px]">
      <SearchGlass />
    </div>
    <svg width="18" height="18" viewBox="0 0 18 18" className="ml-[15px]" fill="#bdbdbd"><path d="M0 3H6V6H0ZM8 3H13V6H8ZM11 8H17V11H11ZM11 13H17V16H11ZM6 4H8V5H6ZM9 6H10V14H11V15H9ZM9 10H11V9H9Z" /></svg>
    <svg width="20" height="20" viewBox="0 0 20 20" className="ml-[14px]" fill="none" stroke="#bdbdbd" strokeWidth="1.2"><path d="M5 1V9M1 5H9M2 2L8 8M8 2L2 8" /><path d="M13 7L19 10V16L13 19L7 16V10ZM7 10L13 13L19 10M13 13V19" /></svg>
    <svg width="18" height="16" viewBox="0 0 18 16" className="ml-[15px]" fill="#bdbdbd"><path d="M1 9H17V16H1ZM2 7A7 7 0 0 1 16 7H10V5H8V7Z" /></svg>
    <svg width="16" height="17" viewBox="0 0 16 17" className="ml-[9px]" fill="#bdbdbd"><path d="M4 0H16V13H4ZM0 3H3V15H13V17H0Z" /><path d="M6 2H7M6 5H7M6 8H7M6 11H7M13 2H14M13 5H14M13 8H14M13 11H14" stroke="#222" /></svg>
    <svg width="16" height="16" viewBox="0 0 16 16" className="ml-[10px]" fill="none" stroke="#bdbdbd" strokeWidth="1.2"><circle cx="10" cy="6" r="5.5" fill="#888" /><circle cx="7.5" cy="8.5" r="5.5" /><circle cx="5.5" cy="10.5" r="5" /></svg>
    <svg width="16" height="16" viewBox="0 0 16 16" className="ml-[18px]" fill="none" stroke="#bdbdbd" strokeWidth="1.2"><path d="M1 2H15V15H1ZM4 0V3M12 0V3M3 6H6L10 12H13" /></svg>
  </div>
);

const ColHead = ({ className = '', children }: { className?: string; children?: React.ReactNode }) => (
  <div className={`flex h-full shrink-0 items-center border-r border-[#111] ${className}`}>{children}</div>
);

const LayerHead = () => (
  <div className="flex h-[19px] shrink-0 items-center border-y border-[#0e0e0e] text-[9.5px] text-[#8c8c8c]">
    <ColHead className="w-[69px] gap-[3px] pl-[6px] text-[#b8b8b8]">
      <Eye />
      <svg width="11" height="12" viewBox="0 0 11 12" fill="#c0c0c0"><path d="M0 4H3L7 0V12L3 8H0ZM8 3Q11 6 8 9Z" /></svg>
      <span className="ml-[2px] h-[8px] w-[8px] rounded-full bg-[#b8b8b8]" />
      <svg width="10" height="12" viewBox="0 0 10 12" className="ml-[4px]" fill="#c0c0c0"><path d="M1 5H2.5V3A2.5 2.5 0 0 1 7.5 3V5H9V12H1ZM3.7 5H6.3V3A1.3 1.3 0 0 0 3.7 3Z" fillRule="evenodd" /></svg>
    </ColHead>
    <ColHead className="w-[31px] pl-[12px]">
      <svg width="13" height="13" viewBox="0 0 13 13" fill="#bdbdbd"><path d="M0 0H6L13 7L7 13L0 6Z" /></svg>
    </ColHead>
    <ColHead className="w-[34px] pl-[5px] pt-[3px]">#</ColHead>
    <ColHead className="w-[168px] pl-[5px] pt-[3px]">Layer Name</ColHead>
    <div className="flex h-full w-[80px] shrink-0 items-center pl-[5px] pt-[3px]">Mode</div>
    <div className="flex h-full w-[18px] shrink-0 items-center pt-[3px]">T</div>
    <ColHead className="w-[67px] pt-[3px]">TrkMat</ColHead>
    <ColHead className="w-[117px] pl-[5px] pt-[3px]">Parent &amp; Link</ColHead>
  </div>
);

const LayerRow = ({ n }: { n: number }) => (
  <div className="flex h-[17px] shrink-0 items-center border-b border-[#1d1d1d] pt-[1px] text-[11px]">
    <div className="ml-[4px] flex h-[15px] w-[16px] shrink-0 items-center justify-center bg-[#232323]"><Eye /></div>
    <span className="ml-[15px] h-[15px] w-[13px] shrink-0 bg-[#202020]" />
    <span className="ml-[2px] h-[15px] w-[13px] shrink-0 bg-[#202020]" />
    <ChevronRight size={11} strokeWidth={1.5} className="ml-[8px] shrink-0 text-[#a0a0a0]" />
    <span className="ml-[4px] h-[13px] w-[12px] shrink-0 bg-[#ad9c7c]" />
    <span className="w-[24px] shrink-0 pt-[1px] text-center font-bold text-[#a0a0a0]">{n}</span>
    <CompIcon className="ml-[13px]" />
    <span className="ml-[5px] w-[150px] shrink-0 pt-[1px] font-medium tracking-[0.2px] text-[#9a9a9a]">[CameraX{n}]</span>
    <Dropdown label="Normal" className="w-[67px]" />
    <span className="ml-[7px] h-[15px] w-[13px] shrink-0 bg-[#202020]" />
    {n === 1 ? <span className="ml-[6px] w-[64px] shrink-0" /> : <Dropdown label="None" className="ml-[6px] w-[64px]" />}
    <span className="ml-[9px] flex w-[13px] shrink-0 justify-center"><Spiral /></span>
    <Dropdown label="None" className="ml-[7px] w-[89px]" />
  </div>
);

const TimeRuler = () => (
  <div className="relative flex min-h-0 min-w-0 flex-1 flex-col border-l border-[#111]">
    <div className="relative mr-[-4px] h-[9px] shrink-0 overflow-hidden rounded-full bg-[#6a6a6a]">
      <span className="absolute left-0 top-0 h-[9px] w-[7px] rounded-l-full bg-[#2f8df0]" />
      <span className="absolute right-0 top-0 h-[9px] w-[6px] rounded-r-full bg-[#2f8df0]" />
    </div>
    <div className="flex h-[21px] shrink-0 items-center justify-between text-[10px] text-[#9a9a9a]">
      <span>0:00f</span>
      <span className="mr-[-4px]">01f</span>
    </div>
    <div className="relative h-[16px] shrink-0 bg-[#696969]">
      <span className="absolute left-0 top-0 h-[16px] w-[6px] rounded-l-[4px] bg-[#2f8df0]" />
      <span className="absolute right-0 top-0 h-[16px] w-[5px] rounded-r-[4px] bg-[#2f8df0]" />
    </div>
    <div className="ml-[6px] mr-[3px] h-[3px] shrink-0 bg-[#1fc02a]" />
    <div className="flex min-h-0 flex-1 flex-col overflow-hidden pl-[7px] pr-[4px]">
      {LAYERS.map(n => (
        <div key={n} className="relative h-[17px] shrink-0 border-b border-[#2c2c2c] bg-[#7d705d]">
          <span className="absolute left-0 top-0 h-0 w-0 border-r-[4px] border-t-[4px] border-r-transparent border-t-[#3a3a3a]" />
          <span className="absolute right-0 top-0 h-0 w-0 border-l-[4px] border-t-[4px] border-l-transparent border-t-[#3a3a3a]" />
        </div>
      ))}
    </div>
    {/* playhead sits over the ruler and the bars */}
    <div className="absolute bottom-0 left-[6px] top-[13px] w-[1px] bg-[#2f8df0]" />
    <svg width="14" height="14" viewBox="0 0 14 14" className="absolute left-0 top-[13px]" fill="#2f8df0"><path d="M0 0H14V7L7 14L0 7Z" /></svg>
  </div>
);

const Timeline = () => (
  <div className="flex min-h-0 flex-1 flex-col bg-[#262626]">
    <div className="flex min-h-0 flex-1">
      <div className="flex w-[600px] shrink-0 flex-col">
        <TimelineTabs />
        <TimelineControls />
        <LayerHead />
        <div className="flex min-h-0 flex-1 flex-col overflow-hidden">
          {LAYERS.map(n => <LayerRow key={n} n={n} />)}
        </div>
      </div>
      <div className="ml-[1px] flex min-h-0 w-[768px] shrink-0 flex-col pt-[36px]">
        <TimeRuler />
      </div>
      <div className="ml-[4px] flex min-w-0 flex-1 flex-col items-center pt-[66px]">
        <svg width="12" height="15" viewBox="0 0 12 15" fill="#b8b8b8"><path d="M0 0H12V10L6 15L0 10Z" /></svg>
        <svg width="15" height="14" viewBox="0 0 15 14" className="mt-[5px]" fill="none" stroke="#c4c4c4" strokeWidth="1.2"><path d="M1 8L5 2H14V6H6" /><circle cx="5.5" cy="10" r="3" /></svg>
        <div className="mt-[2px] w-[16px] flex-1 rounded-t-full bg-[#1c1c1c]" />
      </div>
    </div>
    <div className="flex h-[15px] shrink-0 items-center border-t border-[#0c0c0c] bg-[#262626] text-[11px] text-[#a8a8a8]">
      <svg width="12" height="12" viewBox="0 0 12 12" className="ml-[6px]" fill="none" stroke="#bdbdbd"><rect x="0.5" y="0.5" width="8" height="8" /><rect x="3.5" y="3.5" width="8" height="8" /></svg>
      <svg width="12" height="13" viewBox="0 0 12 13" className="ml-[6px]" fill="none" stroke={BLUE}><circle cx="5" cy="5" r="4" /><rect x="4" y="4" width="7.5" height="8" /></svg>
      <svg width="10" height="13" viewBox="0 0 10 13" className="ml-[7px]" fill="#8c8c8c"><path d="M0 2H3V11H0ZM7 2H10V11H7ZM3.5 0H6.5V13H3.5Z" /></svg>
      <div className="ml-[250px] flex h-full w-[163px] shrink-0 items-center justify-center rounded-t-[2px] bg-[#1d1d1d] pt-[2px] text-[11px]">Toggle Switches / Modes</div>
      <span className="ml-[141px] h-0 w-0 border-x-[4px] border-b-[5px] border-x-transparent border-b-[#b8b8b8]" />
      <span className="ml-[13px] h-[9px] w-[9px] rounded-full border-[1.5px] border-[#b8b8b8]" />
      <span className="h-[2px] w-[39px] bg-[#3a3a3a]" />
      <svg width="16" height="9" viewBox="0 0 16 9" className="ml-[12px]" fill="#b8b8b8"><path d="M0 9L5 3L7 5L10 0L16 9Z" /></svg>
    </div>
  </div>
);

const App: React.FC = () => {
  return (
    <div className="flex h-[1279px] w-[1393px] flex-col overflow-hidden bg-[#1b1b1b] font-['Roboto','Liberation_Sans',sans-serif]">
      <MenuBar />
      <TitleBar />
      <Toolbar />
      <div className="flex h-[782px] shrink-0 pt-[2px]">
        <ProjectPanel />
        <ViewerPanel />
        <SidePanel />
      </div>
      <div className="flex h-[2px] shrink-0" />
      <Timeline />
    </div>
  );
};

export default App;
